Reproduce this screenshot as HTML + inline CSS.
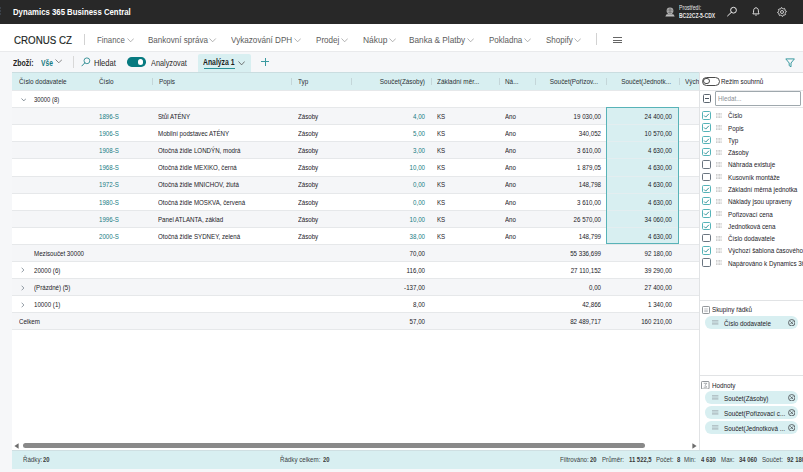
<!DOCTYPE html>
<html><head><meta charset="utf-8">
<style>
*{box-sizing:border-box;margin:0;padding:0}
html,body{width:803px;height:472px;overflow:hidden;background:#f6f7f9;font-family:"Liberation Sans",sans-serif;color:#22211f}
.a{position:absolute}
.t{position:absolute;white-space:nowrap;line-height:1}
</style></head><body>

<div class="a" style="left:0;top:0;width:803px;height:24.4px;background:#282828"></div>
<div class="a" style="left:-0.5px;top:7.3px;width:1.6px;height:1.6px;background:#3a4048"></div>
<div class="a" style="left:-0.5px;top:10.3px;width:1.6px;height:1.6px;background:#3a4048"></div>
<div class="a" style="left:-0.5px;top:13.3px;width:1.6px;height:1.6px;background:#3a4048"></div>
<div class="t" style="left:12.60px;top:8px;font-size:8.4px;color:#fff;font-weight:bold;transform:scaleX(0.93);transform-origin:0 0">Dynamics 365 Business Central</div>
<svg class="a" style="left:664.5px;top:7.3px" width="10" height="10" viewBox="0 0 10 10"><circle cx="5" cy="3.8" r="3.4" fill="#bdbdbd"/><path d="M5 0.6v6.4M1.8 3.8h6.4M2.4 2.2h5.2M2.4 5.4h5.2" stroke="#3a3a3a" stroke-width="0.45"/><path d="M0.3 9.4L1.6 7.2h6.8L9.7 9.4z" fill="#bdbdbd"/></svg>
<div class="t" style="left:679.00px;top:5px;font-size:6.85px;color:#e6e6e6;transform:scaleX(0.75);transform-origin:0 0">Prostředí:</div>
<div class="t" style="left:679.00px;top:13px;font-size:6.85px;color:#e6e6e6;font-weight:bold;transform:scaleX(0.73);transform-origin:0 0">BC22CZ-5-CDX</div>
<svg class="a" style="left:725.5px;top:6px" width="12" height="11" viewBox="0 0 12 11"><circle cx="7.5" cy="4.2" r="2.9" fill="none" stroke="#f2f2f2" stroke-width="0.95"/><path d="M5.4 6.3L1.6 9.9" stroke="#f2f2f2" stroke-width="1" stroke-linecap="round"/></svg>
<svg class="a" style="left:752.4px;top:6.5px" width="8" height="9" viewBox="0 0 8 9"><path d="M0.9 6.9C1.6 6 1.6 5 1.6 3.8 1.6 2 2.6 0.8 4 0.8S6.4 2 6.4 3.8c0 1.2 0 2.2.7 3.1z" fill="none" stroke="#f2f2f2" stroke-width="0.9" stroke-linejoin="round"/><path d="M3.1 7.8c.25.35.55.5.9.5s.65-.15.9-.5" fill="none" stroke="#f2f2f2" stroke-width="0.75"/></svg>
<svg class="a" style="left:776.8px;top:6.5px" width="10" height="10" viewBox="0 0 10 10"><path d="M9.22 4.16 L9.30 5.00 L8.33 5.66 L8.14 6.30 L8.58 7.39 L8.04 8.04 L6.89 7.83 L6.30 8.14 L5.84 9.22 L5.00 9.30 L4.34 8.33 L3.70 8.14 L2.61 8.58 L1.96 8.04 L2.17 6.89 L1.86 6.30 L0.78 5.84 L0.70 5.00 L1.67 4.34 L1.86 3.70 L1.42 2.61 L1.96 1.96 L3.11 2.17 L3.70 1.86 L4.16 0.78 L5.00 0.70 L5.66 1.67 L6.30 1.86 L7.39 1.42 L8.04 1.96 L7.83 3.11 L8.14 3.70Z" fill="none" stroke="#f2f2f2" stroke-width="0.8" stroke-linejoin="round"/><circle cx="5" cy="5" r="1.5" fill="none" stroke="#f2f2f2" stroke-width="0.8"/></svg>
<div class="a" style="left:0;top:24.4px;width:803px;height:26.6px;background:#fff"></div>
<div class="a" style="left:0;top:50.5px;width:803px;height:1px;background:#e9eaec"></div>
<div class="t" style="left:13.80px;top:36px;font-size:10.2px;color:#201f1e;transform:scaleX(0.957);transform-origin:0 0;-webkit-text-stroke:0.15px #201f1e">CRONUS CZ</div>
<div class="a" style="left:83.5px;top:33.5px;width:1px;height:11.5px;background:#d2d2d2"></div>
<div class="t" style="left:97.20px;top:36px;font-size:8.4px;color:#5c5c5c;transform:scaleX(0.93);transform-origin:0 0">Finance</div>
<svg class="a" style="left:126.50px;top:37.90px" width="7.3" height="4.3" viewBox="0 0 7.3 4.3"><path d="M0.5 0.5L3.65 3.80L6.80 0.5" fill="none" stroke="#9a9a9a" stroke-width="0.75"/></svg>
<div class="t" style="left:147.70px;top:36px;font-size:8.4px;color:#5c5c5c;transform:scaleX(0.962);transform-origin:0 0">Bankovní správa</div>
<svg class="a" style="left:209.40px;top:37.90px" width="7.3" height="4.3" viewBox="0 0 7.3 4.3"><path d="M0.5 0.5L3.65 3.80L6.80 0.5" fill="none" stroke="#9a9a9a" stroke-width="0.75"/></svg>
<div class="t" style="left:231.00px;top:36px;font-size:8.4px;color:#5c5c5c;transform:scaleX(0.972);transform-origin:0 0">Vykazování DPH</div>
<svg class="a" style="left:293.90px;top:37.90px" width="7.3" height="4.3" viewBox="0 0 7.3 4.3"><path d="M0.5 0.5L3.65 3.80L6.80 0.5" fill="none" stroke="#9a9a9a" stroke-width="0.75"/></svg>
<div class="t" style="left:316.00px;top:36px;font-size:8.4px;color:#5c5c5c;transform:scaleX(0.964);transform-origin:0 0">Prodej</div>
<svg class="a" style="left:340.90px;top:37.90px" width="7.3" height="4.3" viewBox="0 0 7.3 4.3"><path d="M0.5 0.5L3.65 3.80L6.80 0.5" fill="none" stroke="#9a9a9a" stroke-width="0.75"/></svg>
<div class="t" style="left:362.50px;top:36px;font-size:8.4px;color:#5c5c5c;transform:scaleX(1.009);transform-origin:0 0">Nákup</div>
<svg class="a" style="left:388.50px;top:37.90px" width="7.3" height="4.3" viewBox="0 0 7.3 4.3"><path d="M0.5 0.5L3.65 3.80L6.80 0.5" fill="none" stroke="#9a9a9a" stroke-width="0.75"/></svg>
<div class="t" style="left:409.00px;top:36px;font-size:8.4px;color:#5c5c5c;transform:scaleX(0.982);transform-origin:0 0">Banka &amp; Platby</div>
<svg class="a" style="left:466.90px;top:37.90px" width="7.3" height="4.3" viewBox="0 0 7.3 4.3"><path d="M0.5 0.5L3.65 3.80L6.80 0.5" fill="none" stroke="#9a9a9a" stroke-width="0.75"/></svg>
<div class="t" style="left:489.00px;top:36px;font-size:8.4px;color:#5c5c5c;transform:scaleX(0.954);transform-origin:0 0">Pokladna</div>
<svg class="a" style="left:523.90px;top:37.90px" width="7.3" height="4.3" viewBox="0 0 7.3 4.3"><path d="M0.5 0.5L3.65 3.80L6.80 0.5" fill="none" stroke="#9a9a9a" stroke-width="0.75"/></svg>
<div class="t" style="left:545.50px;top:36px;font-size:8.4px;color:#5c5c5c;transform:scaleX(0.96);transform-origin:0 0">Shopify</div>
<svg class="a" style="left:573.90px;top:37.90px" width="7.3" height="4.3" viewBox="0 0 7.3 4.3"><path d="M0.5 0.5L3.65 3.80L6.80 0.5" fill="none" stroke="#9a9a9a" stroke-width="0.75"/></svg>
<div class="a" style="left:596px;top:33px;width:1px;height:12px;background:#d2d2d2"></div>
<div class="a" style="left:613px;top:37.0px;width:9px;height:0.9px;background:#666"></div>
<div class="a" style="left:613px;top:39.6px;width:9px;height:0.9px;background:#666"></div>
<div class="a" style="left:613px;top:42.2px;width:9px;height:0.9px;background:#666"></div>
<div class="t" style="left:12.60px;top:59px;font-size:8.4px;color:#252423;font-weight:bold;transform:scaleX(0.83);transform-origin:0 0">Zboží:</div>
<div class="t" style="left:41.40px;top:59px;font-size:8.4px;color:#197c83;font-weight:bold;transform:scaleX(0.8);transform-origin:0 0">Vše</div>
<svg class="a" style="left:54.80px;top:59.30px" width="7.6" height="4.3" viewBox="0 0 7.6 4.3"><path d="M0.5 0.5L3.80 3.80L7.10 0.5" fill="none" stroke="#6a6a6a" stroke-width="0.8"/></svg>
<div class="a" style="left:72.5px;top:56px;width:1px;height:11.5px;background:#d8d8d8"></div>
<svg class="a" style="left:81px;top:57px" width="10" height="10" viewBox="0 0 10 10"><circle cx="5.9" cy="3.8" r="2.9" fill="none" stroke="#2f8c93" stroke-width="0.9"/><path d="M3.8 5.9L0.9 8.9" stroke="#2f8c93" stroke-width="1" stroke-linecap="round"/></svg>
<div class="t" style="left:94.20px;top:59px;font-size:8.4px;color:#252423;transform:scaleX(0.9);transform-origin:0 0">Hledat</div>
<div class="a" style="left:126.8px;top:57px;width:19.2px;height:9.5px;border-radius:4.75px;background:#077a80"></div>
<div class="a" style="left:137.6px;top:59px;width:5.6px;height:5.6px;border-radius:50%;background:#fff"></div>
<div class="t" style="left:151.00px;top:59px;font-size:8.4px;color:#2e2d2c;transform:scaleX(0.876);transform-origin:0 0">Analyzovat</div>
<div class="a" style="left:198px;top:54.2px;width:52.5px;height:18.5px;background:#d8eff1;border-radius:2px 2px 0 0"></div>
<div class="t" style="left:203.30px;top:58px;font-size:8.4px;color:#201f1e;font-weight:bold;transform:scaleX(0.815);transform-origin:0 0">Analýza 1</div>
<div class="a" style="left:203.5px;top:67.9px;width:31.3px;height:1.2px;background:#2a9198"></div>
<svg class="a" style="left:237.60px;top:60.80px" width="7.2" height="4.4" viewBox="0 0 7.2 4.4"><path d="M0.5 0.5L3.60 3.90L6.70 0.5" fill="none" stroke="#555" stroke-width="0.8"/></svg>
<div class="a" style="left:261.2px;top:61.3px;width:8px;height:1px;background:#3b9aa0"></div>
<div class="a" style="left:264.7px;top:57.5px;width:1px;height:8.5px;background:#3b9aa0"></div>
<svg class="a" style="left:784.8px;top:57.8px" width="10" height="10" viewBox="0 0 10 10"><path d="M0.8 0.9h8.6L6 5v3.8L4.2 7.6V5z" fill="none" stroke="#3a9aa0" stroke-width="1" stroke-linejoin="round"/></svg>
<div class="a" style="left:12px;top:72px;width:687px;height:378px;background:#fff"></div>
<div class="a" style="left:12px;top:72px;width:687px;height:18px;background:#d8eff1;border-top:0.8px solid #cadde0"></div>
<div class="t" style="left:19.10px;top:79px;font-size:6.85px;color:#2a3033;transform:scaleX(0.935);transform-origin:0 0">Číslo dodavatele</div>
<div class="t" style="left:98.60px;top:79px;font-size:6.85px;color:#2a3033;transform:scaleX(0.935);transform-origin:0 0">Číslo</div>
<div class="a" style="left:152px;top:77.5px;width:0.8px;height:7.5px;background:#c4d6d9"></div>
<div class="a" style="left:291.2px;top:77.5px;width:0.8px;height:7.5px;background:#c4d6d9"></div>
<div class="a" style="left:351px;top:77.5px;width:0.8px;height:7.5px;background:#c4d6d9"></div>
<div class="a" style="left:430.7px;top:77.5px;width:0.8px;height:7.5px;background:#c4d6d9"></div>
<div class="a" style="left:498.5px;top:77.5px;width:0.8px;height:7.5px;background:#c4d6d9"></div>
<div class="a" style="left:534.7px;top:77.5px;width:0.8px;height:7.5px;background:#c4d6d9"></div>
<div class="a" style="left:606.4px;top:77.5px;width:0.8px;height:7.5px;background:#c4d6d9"></div>
<div class="a" style="left:678.7px;top:77.5px;width:0.8px;height:7.5px;background:#c4d6d9"></div>
<div class="t" style="left:158.60px;top:79px;font-size:6.85px;color:#2a3033;transform:scaleX(0.935);transform-origin:0 0">Popis</div>
<div class="t" style="left:298.00px;top:79px;font-size:6.85px;color:#2a3033;transform:scaleX(0.935);transform-origin:0 0">Typ</div>
<div class="t" style="left:324.50px;top:79px;font-size:6.85px;color:#2a3033;transform:scaleX(0.935);transform-origin:100% 0;width:100px;text-align:right">Součet(Zásoby)</div>
<div class="t" style="left:437.40px;top:79px;font-size:6.85px;color:#2a3033;transform:scaleX(0.935);transform-origin:0 0">Základní měr...</div>
<div class="t" style="left:505.40px;top:79px;font-size:6.85px;color:#2a3033;transform:scaleX(0.935);transform-origin:0 0">Ná...</div>
<div class="t" style="left:498.00px;top:79px;font-size:6.85px;color:#2a3033;transform:scaleX(0.935);transform-origin:100% 0;width:100px;text-align:right">Součet(Pořizov...</div>
<div class="t" style="left:571.00px;top:79px;font-size:6.85px;color:#2a3033;transform:scaleX(0.935);transform-origin:100% 0;width:100px;text-align:right">Součet(Jednotk...</div>
<div class="t" style="left:684.70px;top:79px;font-size:6.85px;color:#2a3033;transform:scaleX(0.935);transform-origin:0 0">Vých</div>
<div class="a" style="left:12px;top:90.00px;width:687px;height:17.1px;background:#fff"></div>
<div class="a" style="left:12px;top:107.10px;width:687px;height:17.1px;background:#f5f6f8"></div>
<div class="a" style="left:12px;top:124.20px;width:687px;height:17.1px;background:#fff"></div>
<div class="a" style="left:12px;top:141.30px;width:687px;height:17.1px;background:#f5f6f8"></div>
<div class="a" style="left:12px;top:158.40px;width:687px;height:17.1px;background:#fff"></div>
<div class="a" style="left:12px;top:175.50px;width:687px;height:17.1px;background:#f5f6f8"></div>
<div class="a" style="left:12px;top:192.60px;width:687px;height:17.1px;background:#fff"></div>
<div class="a" style="left:12px;top:209.70px;width:687px;height:17.1px;background:#f5f6f8"></div>
<div class="a" style="left:12px;top:226.80px;width:687px;height:17.1px;background:#fff"></div>
<div class="a" style="left:12px;top:243.90px;width:687px;height:17.1px;background:#f5f6f8"></div>
<div class="a" style="left:12px;top:261.00px;width:687px;height:17.1px;background:#fff"></div>
<div class="a" style="left:12px;top:278.10px;width:687px;height:17.1px;background:#f5f6f8"></div>
<div class="a" style="left:12px;top:295.20px;width:687px;height:17.1px;background:#fff"></div>
<div class="a" style="left:12px;top:312.30px;width:687px;height:17.1px;background:#f5f6f8"></div>
<div class="a" style="left:605.8px;top:107.3px;width:73.2px;height:136.8px;background:#d8eff1"></div>
<div class="a" style="left:12px;top:90.00px;width:687px;height:0.9px;background:#e6e8ea"></div>
<div class="a" style="left:12px;top:107.10px;width:687px;height:0.9px;background:#e6e8ea"></div>
<div class="a" style="left:12px;top:124.20px;width:687px;height:0.9px;background:#e6e8ea"></div>
<div class="a" style="left:12px;top:141.30px;width:687px;height:0.9px;background:#e6e8ea"></div>
<div class="a" style="left:12px;top:158.40px;width:687px;height:0.9px;background:#e6e8ea"></div>
<div class="a" style="left:12px;top:175.50px;width:687px;height:0.9px;background:#e6e8ea"></div>
<div class="a" style="left:12px;top:192.60px;width:687px;height:0.9px;background:#e6e8ea"></div>
<div class="a" style="left:12px;top:209.70px;width:687px;height:0.9px;background:#e6e8ea"></div>
<div class="a" style="left:12px;top:226.80px;width:687px;height:0.9px;background:#e6e8ea"></div>
<div class="a" style="left:12px;top:243.90px;width:687px;height:0.9px;background:#e6e8ea"></div>
<div class="a" style="left:12px;top:261.00px;width:687px;height:0.9px;background:#e6e8ea"></div>
<div class="a" style="left:12px;top:278.10px;width:687px;height:0.9px;background:#e6e8ea"></div>
<div class="a" style="left:12px;top:295.20px;width:687px;height:0.9px;background:#e6e8ea"></div>
<div class="a" style="left:12px;top:312.30px;width:687px;height:0.9px;background:#e6e8ea"></div>
<div class="a" style="left:12px;top:329.40px;width:687px;height:0.9px;background:#e6e8ea"></div>
<div class="a" style="left:605.8px;top:124.20px;width:73.2px;height:0.9px;background:#e3eef0"></div>
<div class="a" style="left:605.8px;top:141.30px;width:73.2px;height:0.9px;background:#e3eef0"></div>
<div class="a" style="left:605.8px;top:158.40px;width:73.2px;height:0.9px;background:#e3eef0"></div>
<div class="a" style="left:605.8px;top:175.50px;width:73.2px;height:0.9px;background:#e3eef0"></div>
<div class="a" style="left:605.8px;top:192.60px;width:73.2px;height:0.9px;background:#e3eef0"></div>
<div class="a" style="left:605.8px;top:209.70px;width:73.2px;height:0.9px;background:#e3eef0"></div>
<div class="a" style="left:605.8px;top:226.80px;width:73.2px;height:0.9px;background:#e3eef0"></div>
<svg class="a" style="left:20.80px;top:97.80px" width="5.6" height="3.4" viewBox="0 0 5.6 3.4"><path d="M0.5 0.5L2.80 2.90L5.10 0.5" fill="none" stroke="#6b7782" stroke-width="0.8"/></svg>
<div class="t" style="left:33.90px;top:97px;font-size:6.85px;transform:scaleX(0.86);transform-origin:0 0">30000 (8)</div>
<div class="t" style="left:99.00px;top:114px;font-size:6.85px;color:#177c83;transform:scaleX(0.9);transform-origin:0 0">1896-S</div>
<div class="t" style="left:158.00px;top:114px;font-size:6.85px;transform:scaleX(0.9);transform-origin:0 0">Stůl ATÉNY</div>
<div class="t" style="left:298.30px;top:114px;font-size:6.85px;transform:scaleX(0.9);transform-origin:0 0">Zásoby</div>
<div class="t" style="left:325.00px;top:114px;font-size:6.85px;color:#177c83;transform:scaleX(0.9);transform-origin:100% 0;width:100px;text-align:right">4,00</div>
<div class="t" style="left:437.40px;top:114px;font-size:6.85px;transform:scaleX(0.9);transform-origin:0 0">KS</div>
<div class="t" style="left:505.30px;top:114px;font-size:6.85px;transform:scaleX(0.9);transform-origin:0 0">Ano</div>
<div class="t" style="left:500.60px;top:114px;font-size:6.85px;transform:scaleX(0.9);transform-origin:100% 0;width:100px;text-align:right">19 030,00</div>
<div class="t" style="left:572.00px;top:114px;font-size:6.85px;transform:scaleX(0.9);transform-origin:100% 0;width:100px;text-align:right">24 400,00</div>
<div class="t" style="left:99.00px;top:131px;font-size:6.85px;color:#177c83;transform:scaleX(0.9);transform-origin:0 0">1906-S</div>
<div class="t" style="left:158.00px;top:131px;font-size:6.85px;transform:scaleX(0.9);transform-origin:0 0">Mobilní podstavec ATÉNY</div>
<div class="t" style="left:298.30px;top:131px;font-size:6.85px;transform:scaleX(0.9);transform-origin:0 0">Zásoby</div>
<div class="t" style="left:325.00px;top:131px;font-size:6.85px;color:#177c83;transform:scaleX(0.9);transform-origin:100% 0;width:100px;text-align:right">5,00</div>
<div class="t" style="left:437.40px;top:131px;font-size:6.85px;transform:scaleX(0.9);transform-origin:0 0">KS</div>
<div class="t" style="left:505.30px;top:131px;font-size:6.85px;transform:scaleX(0.9);transform-origin:0 0">Ano</div>
<div class="t" style="left:500.60px;top:131px;font-size:6.85px;transform:scaleX(0.9);transform-origin:100% 0;width:100px;text-align:right">340,052</div>
<div class="t" style="left:572.00px;top:131px;font-size:6.85px;transform:scaleX(0.9);transform-origin:100% 0;width:100px;text-align:right">10 570,00</div>
<div class="t" style="left:99.00px;top:148px;font-size:6.85px;color:#177c83;transform:scaleX(0.9);transform-origin:0 0">1908-S</div>
<div class="t" style="left:158.00px;top:148px;font-size:6.85px;transform:scaleX(0.9);transform-origin:0 0">Otočná židle LONDÝN, modrá</div>
<div class="t" style="left:298.30px;top:148px;font-size:6.85px;transform:scaleX(0.9);transform-origin:0 0">Zásoby</div>
<div class="t" style="left:325.00px;top:148px;font-size:6.85px;color:#177c83;transform:scaleX(0.9);transform-origin:100% 0;width:100px;text-align:right">3,00</div>
<div class="t" style="left:437.40px;top:148px;font-size:6.85px;transform:scaleX(0.9);transform-origin:0 0">KS</div>
<div class="t" style="left:505.30px;top:148px;font-size:6.85px;transform:scaleX(0.9);transform-origin:0 0">Ano</div>
<div class="t" style="left:500.60px;top:148px;font-size:6.85px;transform:scaleX(0.9);transform-origin:100% 0;width:100px;text-align:right">3 610,00</div>
<div class="t" style="left:572.00px;top:148px;font-size:6.85px;transform:scaleX(0.9);transform-origin:100% 0;width:100px;text-align:right">4 630,00</div>
<div class="t" style="left:99.00px;top:165px;font-size:6.85px;color:#177c83;transform:scaleX(0.9);transform-origin:0 0">1968-S</div>
<div class="t" style="left:158.00px;top:165px;font-size:6.85px;transform:scaleX(0.9);transform-origin:0 0">Otočná židle MEXIKO, černá</div>
<div class="t" style="left:298.30px;top:165px;font-size:6.85px;transform:scaleX(0.9);transform-origin:0 0">Zásoby</div>
<div class="t" style="left:325.00px;top:165px;font-size:6.85px;color:#177c83;transform:scaleX(0.9);transform-origin:100% 0;width:100px;text-align:right">10,00</div>
<div class="t" style="left:437.40px;top:165px;font-size:6.85px;transform:scaleX(0.9);transform-origin:0 0">KS</div>
<div class="t" style="left:505.30px;top:165px;font-size:6.85px;transform:scaleX(0.9);transform-origin:0 0">Ano</div>
<div class="t" style="left:500.60px;top:165px;font-size:6.85px;transform:scaleX(0.9);transform-origin:100% 0;width:100px;text-align:right">1 879,05</div>
<div class="t" style="left:572.00px;top:165px;font-size:6.85px;transform:scaleX(0.9);transform-origin:100% 0;width:100px;text-align:right">4 630,00</div>
<div class="t" style="left:99.00px;top:182px;font-size:6.85px;color:#177c83;transform:scaleX(0.9);transform-origin:0 0">1972-S</div>
<div class="t" style="left:158.00px;top:182px;font-size:6.85px;transform:scaleX(0.9);transform-origin:0 0">Otočná židle MNICHOV, žlutá</div>
<div class="t" style="left:298.30px;top:182px;font-size:6.85px;transform:scaleX(0.9);transform-origin:0 0">Zásoby</div>
<div class="t" style="left:325.00px;top:182px;font-size:6.85px;color:#177c83;transform:scaleX(0.9);transform-origin:100% 0;width:100px;text-align:right">0,00</div>
<div class="t" style="left:437.40px;top:182px;font-size:6.85px;transform:scaleX(0.9);transform-origin:0 0">KS</div>
<div class="t" style="left:505.30px;top:182px;font-size:6.85px;transform:scaleX(0.9);transform-origin:0 0">Ano</div>
<div class="t" style="left:500.60px;top:182px;font-size:6.85px;transform:scaleX(0.9);transform-origin:100% 0;width:100px;text-align:right">148,798</div>
<div class="t" style="left:572.00px;top:182px;font-size:6.85px;transform:scaleX(0.9);transform-origin:100% 0;width:100px;text-align:right">4 630,00</div>
<div class="t" style="left:99.00px;top:200px;font-size:6.85px;color:#177c83;transform:scaleX(0.9);transform-origin:0 0">1980-S</div>
<div class="t" style="left:158.00px;top:200px;font-size:6.85px;transform:scaleX(0.9);transform-origin:0 0">Otočná židle MOSKVA, červená</div>
<div class="t" style="left:298.30px;top:200px;font-size:6.85px;transform:scaleX(0.9);transform-origin:0 0">Zásoby</div>
<div class="t" style="left:325.00px;top:200px;font-size:6.85px;color:#177c83;transform:scaleX(0.9);transform-origin:100% 0;width:100px;text-align:right">0,00</div>
<div class="t" style="left:437.40px;top:200px;font-size:6.85px;transform:scaleX(0.9);transform-origin:0 0">KS</div>
<div class="t" style="left:505.30px;top:200px;font-size:6.85px;transform:scaleX(0.9);transform-origin:0 0">Ano</div>
<div class="t" style="left:500.60px;top:200px;font-size:6.85px;transform:scaleX(0.9);transform-origin:100% 0;width:100px;text-align:right">3 610,00</div>
<div class="t" style="left:572.00px;top:200px;font-size:6.85px;transform:scaleX(0.9);transform-origin:100% 0;width:100px;text-align:right">4 630,00</div>
<div class="t" style="left:99.00px;top:217px;font-size:6.85px;color:#177c83;transform:scaleX(0.9);transform-origin:0 0">1996-S</div>
<div class="t" style="left:158.00px;top:217px;font-size:6.85px;transform:scaleX(0.9);transform-origin:0 0">Panel ATLANTA, základ</div>
<div class="t" style="left:298.30px;top:217px;font-size:6.85px;transform:scaleX(0.9);transform-origin:0 0">Zásoby</div>
<div class="t" style="left:325.00px;top:217px;font-size:6.85px;color:#177c83;transform:scaleX(0.9);transform-origin:100% 0;width:100px;text-align:right">10,00</div>
<div class="t" style="left:437.40px;top:217px;font-size:6.85px;transform:scaleX(0.9);transform-origin:0 0">KS</div>
<div class="t" style="left:505.30px;top:217px;font-size:6.85px;transform:scaleX(0.9);transform-origin:0 0">Ano</div>
<div class="t" style="left:500.60px;top:217px;font-size:6.85px;transform:scaleX(0.9);transform-origin:100% 0;width:100px;text-align:right">26 570,00</div>
<div class="t" style="left:572.00px;top:217px;font-size:6.85px;transform:scaleX(0.9);transform-origin:100% 0;width:100px;text-align:right">34 060,00</div>
<div class="t" style="left:99.00px;top:234px;font-size:6.85px;color:#177c83;transform:scaleX(0.9);transform-origin:0 0">2000-S</div>
<div class="t" style="left:158.00px;top:234px;font-size:6.85px;transform:scaleX(0.9);transform-origin:0 0">Otočná židle SYDNEY, zelená</div>
<div class="t" style="left:298.30px;top:234px;font-size:6.85px;transform:scaleX(0.9);transform-origin:0 0">Zásoby</div>
<div class="t" style="left:325.00px;top:234px;font-size:6.85px;color:#177c83;transform:scaleX(0.9);transform-origin:100% 0;width:100px;text-align:right">38,00</div>
<div class="t" style="left:437.40px;top:234px;font-size:6.85px;transform:scaleX(0.9);transform-origin:0 0">KS</div>
<div class="t" style="left:505.30px;top:234px;font-size:6.85px;transform:scaleX(0.9);transform-origin:0 0">Ano</div>
<div class="t" style="left:500.60px;top:234px;font-size:6.85px;transform:scaleX(0.9);transform-origin:100% 0;width:100px;text-align:right">148,799</div>
<div class="t" style="left:572.00px;top:234px;font-size:6.85px;transform:scaleX(0.9);transform-origin:100% 0;width:100px;text-align:right">4 630,00</div>
<div class="t" style="left:34.00px;top:251px;font-size:6.85px;transform:scaleX(0.9);transform-origin:0 0">Mezisoučet 30000</div>
<div class="t" style="left:325.00px;top:251px;font-size:6.85px;transform:scaleX(0.9);transform-origin:100% 0;width:100px;text-align:right">70,00</div>
<div class="t" style="left:500.60px;top:251px;font-size:6.85px;transform:scaleX(0.9);transform-origin:100% 0;width:100px;text-align:right">55 336,699</div>
<div class="t" style="left:572.00px;top:251px;font-size:6.85px;transform:scaleX(0.9);transform-origin:100% 0;width:100px;text-align:right">92 180,00</div>
<svg class="a" style="left:21.1px;top:267.40px" width="4" height="6" viewBox="0 0 4 6"><path d="M0.6 0.7L2.9 3L0.6 5.3" fill="none" stroke="#6f7b87" stroke-width="0.75"/></svg>
<div class="t" style="left:34.00px;top:268px;font-size:6.85px;transform:scaleX(0.9);transform-origin:0 0">20000 (6)</div>
<div class="t" style="left:325.00px;top:268px;font-size:6.85px;transform:scaleX(0.9);transform-origin:100% 0;width:100px;text-align:right">116,00</div>
<div class="t" style="left:500.60px;top:268px;font-size:6.85px;transform:scaleX(0.9);transform-origin:100% 0;width:100px;text-align:right">27 110,152</div>
<div class="t" style="left:572.00px;top:268px;font-size:6.85px;transform:scaleX(0.9);transform-origin:100% 0;width:100px;text-align:right">39 290,00</div>
<svg class="a" style="left:21.1px;top:284.50px" width="4" height="6" viewBox="0 0 4 6"><path d="M0.6 0.7L2.9 3L0.6 5.3" fill="none" stroke="#6f7b87" stroke-width="0.75"/></svg>
<div class="t" style="left:34.00px;top:285px;font-size:6.85px;transform:scaleX(0.9);transform-origin:0 0">(Prázdné) (5)</div>
<div class="t" style="left:325.00px;top:285px;font-size:6.85px;transform:scaleX(0.9);transform-origin:100% 0;width:100px;text-align:right">-137,00</div>
<div class="t" style="left:500.60px;top:285px;font-size:6.85px;transform:scaleX(0.9);transform-origin:100% 0;width:100px;text-align:right">0,00</div>
<div class="t" style="left:572.00px;top:285px;font-size:6.85px;transform:scaleX(0.9);transform-origin:100% 0;width:100px;text-align:right">27 400,00</div>
<svg class="a" style="left:21.1px;top:301.60px" width="4" height="6" viewBox="0 0 4 6"><path d="M0.6 0.7L2.9 3L0.6 5.3" fill="none" stroke="#6f7b87" stroke-width="0.75"/></svg>
<div class="t" style="left:34.00px;top:302px;font-size:6.85px;transform:scaleX(0.9);transform-origin:0 0">10000 (1)</div>
<div class="t" style="left:325.00px;top:302px;font-size:6.85px;transform:scaleX(0.9);transform-origin:100% 0;width:100px;text-align:right">8,00</div>
<div class="t" style="left:500.60px;top:302px;font-size:6.85px;transform:scaleX(0.9);transform-origin:100% 0;width:100px;text-align:right">42,866</div>
<div class="t" style="left:572.00px;top:302px;font-size:6.85px;transform:scaleX(0.9);transform-origin:100% 0;width:100px;text-align:right">1 340,00</div>
<div class="t" style="left:19.00px;top:319px;font-size:6.85px;transform:scaleX(0.9);transform-origin:0 0">Celkem</div>
<div class="t" style="left:325.00px;top:319px;font-size:6.85px;transform:scaleX(0.9);transform-origin:100% 0;width:100px;text-align:right">57,00</div>
<div class="t" style="left:500.60px;top:319px;font-size:6.85px;transform:scaleX(0.9);transform-origin:100% 0;width:100px;text-align:right">82 489,717</div>
<div class="t" style="left:572.00px;top:319px;font-size:6.85px;transform:scaleX(0.9);transform-origin:100% 0;width:100px;text-align:right">160 210,00</div>
<div class="a" style="left:605.8px;top:107.1px;width:73.2px;height:137.2px;border:1.4px solid #58b3b8"></div>
<svg class="a" style="left:13.9px;top:442.5px" width="5" height="6" viewBox="0 0 5 6"><path d="M4.6 0.3V5.7L0.4 3z" fill="#6d6d6d"/></svg>
<div class="a" style="left:23px;top:443px;width:622px;height:5px;border-radius:2.5px;background:#898989"></div>
<svg class="a" style="left:691.8px;top:442.5px" width="5" height="6" viewBox="0 0 5 6"><path d="M0.4 0.3V5.7L4.6 3z" fill="#6d6d6d"/></svg>
<div class="a" style="left:698.6px;top:72px;width:104.4px;height:378px;background:#fff;border-left:1px solid #e1e3e5;border-top:0.8px solid #dfe1e3"></div>
<div class="a" style="left:702px;top:76.6px;width:17.5px;height:9px;border-radius:4.5px;border:0.8px solid #4a4a4a;background:#fff"></div>
<div class="a" style="left:703.4px;top:78.0px;width:6.2px;height:6.2px;border-radius:50%;border:0.8px solid #4a4a4a"></div>
<div class="t" style="left:721.00px;top:79px;font-size:6.85px;transform:scaleX(0.92);transform-origin:0 0">Režim souhrnů</div>
<div class="a" style="left:699.6px;top:89.8px;width:104px;height:0.9px;background:#e6e7e9"></div>
<div class="a" style="left:702.5px;top:94px;width:8.2px;height:8.6px;border:0.9px solid #5c6670;border-radius:1.5px"></div>
<div class="a" style="left:704.6px;top:97.9px;width:4.1px;height:0.9px;background:#4a5560"></div>
<div class="a" style="left:715px;top:91.4px;width:86px;height:14.4px;border:0.9px solid #9fa8ad;border-radius:1px;background:#fff"></div>
<div class="t" style="left:718.30px;top:96px;font-size:6.85px;color:#8a9096;transform:scaleX(0.92);transform-origin:0 0">Hledat...</div>
<div class="a" style="left:699.6px;top:107.2px;width:104px;height:0.9px;background:#e6e7e9"></div>
<div class="a" style="left:702.2px;top:111.20px;width:8.5px;height:8.4px;border:0.95px solid #55b3b8;border-radius:1.6px;background:#fff"></div>
<svg class="a" style="left:702.2px;top:111.20px" width="9" height="9" viewBox="0 0 9 9"><path d="M2.1 4.5L3.7 6.1L6.9 2.8" fill="none" stroke="#2a8f95" stroke-width="0.95"/></svg>
<svg class="a" style="left:715.8px;top:113.00px" width="6" height="6" viewBox="0 0 6 6"><path d="M0.6 0v5.6M2.1 0v5.6M3.6 0v5.6M5.1 0v5.6" stroke="#9c9c9c" stroke-width="0.7" stroke-dasharray="0.8 0.6"/></svg>
<div class="t" style="left:727.70px;top:113px;font-size:6.85px;transform:scaleX(0.92);transform-origin:0 0">Číslo</div>
<div class="a" style="left:702.2px;top:123.47px;width:8.5px;height:8.4px;border:0.95px solid #55b3b8;border-radius:1.6px;background:#fff"></div>
<svg class="a" style="left:702.2px;top:123.47px" width="9" height="9" viewBox="0 0 9 9"><path d="M2.1 4.5L3.7 6.1L6.9 2.8" fill="none" stroke="#2a8f95" stroke-width="0.95"/></svg>
<svg class="a" style="left:715.8px;top:125.27px" width="6" height="6" viewBox="0 0 6 6"><path d="M0.6 0v5.6M2.1 0v5.6M3.6 0v5.6M5.1 0v5.6" stroke="#9c9c9c" stroke-width="0.7" stroke-dasharray="0.8 0.6"/></svg>
<div class="t" style="left:727.70px;top:126px;font-size:6.85px;transform:scaleX(0.92);transform-origin:0 0">Popis</div>
<div class="a" style="left:702.2px;top:135.74px;width:8.5px;height:8.4px;border:0.95px solid #55b3b8;border-radius:1.6px;background:#fff"></div>
<svg class="a" style="left:702.2px;top:135.74px" width="9" height="9" viewBox="0 0 9 9"><path d="M2.1 4.5L3.7 6.1L6.9 2.8" fill="none" stroke="#2a8f95" stroke-width="0.95"/></svg>
<svg class="a" style="left:715.8px;top:137.54px" width="6" height="6" viewBox="0 0 6 6"><path d="M0.6 0v5.6M2.1 0v5.6M3.6 0v5.6M5.1 0v5.6" stroke="#9c9c9c" stroke-width="0.7" stroke-dasharray="0.8 0.6"/></svg>
<div class="t" style="left:727.70px;top:138px;font-size:6.85px;transform:scaleX(0.92);transform-origin:0 0">Typ</div>
<div class="a" style="left:702.2px;top:148.01px;width:8.5px;height:8.4px;border:0.95px solid #55b3b8;border-radius:1.6px;background:#fff"></div>
<svg class="a" style="left:702.2px;top:148.01px" width="9" height="9" viewBox="0 0 9 9"><path d="M2.1 4.5L3.7 6.1L6.9 2.8" fill="none" stroke="#2a8f95" stroke-width="0.95"/></svg>
<svg class="a" style="left:715.8px;top:149.81px" width="6" height="6" viewBox="0 0 6 6"><path d="M0.6 0v5.6M2.1 0v5.6M3.6 0v5.6M5.1 0v5.6" stroke="#9c9c9c" stroke-width="0.7" stroke-dasharray="0.8 0.6"/></svg>
<div class="t" style="left:727.70px;top:150px;font-size:6.85px;transform:scaleX(0.92);transform-origin:0 0">Zásoby</div>
<div class="a" style="left:702.2px;top:160.28px;width:8.5px;height:8.4px;border:0.95px solid #6a7580;border-radius:1.6px;background:#fff"></div>
<svg class="a" style="left:715.8px;top:162.08px" width="6" height="6" viewBox="0 0 6 6"><path d="M0.6 0v5.6M2.1 0v5.6M3.6 0v5.6M5.1 0v5.6" stroke="#9c9c9c" stroke-width="0.7" stroke-dasharray="0.8 0.6"/></svg>
<div class="t" style="left:727.70px;top:162px;font-size:6.85px;transform:scaleX(0.92);transform-origin:0 0">Náhrada existuje</div>
<div class="a" style="left:702.2px;top:172.55px;width:8.5px;height:8.4px;border:0.95px solid #6a7580;border-radius:1.6px;background:#fff"></div>
<svg class="a" style="left:715.8px;top:174.35px" width="6" height="6" viewBox="0 0 6 6"><path d="M0.6 0v5.6M2.1 0v5.6M3.6 0v5.6M5.1 0v5.6" stroke="#9c9c9c" stroke-width="0.7" stroke-dasharray="0.8 0.6"/></svg>
<div class="t" style="left:727.70px;top:175px;font-size:6.85px;transform:scaleX(0.92);transform-origin:0 0">Kusovník montáže</div>
<div class="a" style="left:702.2px;top:184.82px;width:8.5px;height:8.4px;border:0.95px solid #55b3b8;border-radius:1.6px;background:#fff"></div>
<svg class="a" style="left:702.2px;top:184.82px" width="9" height="9" viewBox="0 0 9 9"><path d="M2.1 4.5L3.7 6.1L6.9 2.8" fill="none" stroke="#2a8f95" stroke-width="0.95"/></svg>
<svg class="a" style="left:715.8px;top:186.62px" width="6" height="6" viewBox="0 0 6 6"><path d="M0.6 0v5.6M2.1 0v5.6M3.6 0v5.6M5.1 0v5.6" stroke="#9c9c9c" stroke-width="0.7" stroke-dasharray="0.8 0.6"/></svg>
<div class="t" style="left:727.70px;top:187px;font-size:6.85px;transform:scaleX(0.92);transform-origin:0 0">Základní měrná jednotka</div>
<div class="a" style="left:702.2px;top:197.09px;width:8.5px;height:8.4px;border:0.95px solid #55b3b8;border-radius:1.6px;background:#fff"></div>
<svg class="a" style="left:702.2px;top:197.09px" width="9" height="9" viewBox="0 0 9 9"><path d="M2.1 4.5L3.7 6.1L6.9 2.8" fill="none" stroke="#2a8f95" stroke-width="0.95"/></svg>
<svg class="a" style="left:715.8px;top:198.89px" width="6" height="6" viewBox="0 0 6 6"><path d="M0.6 0v5.6M2.1 0v5.6M3.6 0v5.6M5.1 0v5.6" stroke="#9c9c9c" stroke-width="0.7" stroke-dasharray="0.8 0.6"/></svg>
<div class="t" style="left:727.70px;top:199px;font-size:6.85px;transform:scaleX(0.92);transform-origin:0 0">Náklady jsou upraveny</div>
<div class="a" style="left:702.2px;top:209.36px;width:8.5px;height:8.4px;border:0.95px solid #55b3b8;border-radius:1.6px;background:#fff"></div>
<svg class="a" style="left:702.2px;top:209.36px" width="9" height="9" viewBox="0 0 9 9"><path d="M2.1 4.5L3.7 6.1L6.9 2.8" fill="none" stroke="#2a8f95" stroke-width="0.95"/></svg>
<svg class="a" style="left:715.8px;top:211.16px" width="6" height="6" viewBox="0 0 6 6"><path d="M0.6 0v5.6M2.1 0v5.6M3.6 0v5.6M5.1 0v5.6" stroke="#9c9c9c" stroke-width="0.7" stroke-dasharray="0.8 0.6"/></svg>
<div class="t" style="left:727.70px;top:212px;font-size:6.85px;transform:scaleX(0.92);transform-origin:0 0">Pořizovací cena</div>
<div class="a" style="left:702.2px;top:221.63px;width:8.5px;height:8.4px;border:0.95px solid #55b3b8;border-radius:1.6px;background:#fff"></div>
<svg class="a" style="left:702.2px;top:221.63px" width="9" height="9" viewBox="0 0 9 9"><path d="M2.1 4.5L3.7 6.1L6.9 2.8" fill="none" stroke="#2a8f95" stroke-width="0.95"/></svg>
<svg class="a" style="left:715.8px;top:223.43px" width="6" height="6" viewBox="0 0 6 6"><path d="M0.6 0v5.6M2.1 0v5.6M3.6 0v5.6M5.1 0v5.6" stroke="#9c9c9c" stroke-width="0.7" stroke-dasharray="0.8 0.6"/></svg>
<div class="t" style="left:727.70px;top:224px;font-size:6.85px;transform:scaleX(0.92);transform-origin:0 0">Jednotková cena</div>
<div class="a" style="left:702.2px;top:233.90px;width:8.5px;height:8.4px;border:0.95px solid #6a7580;border-radius:1.6px;background:#fff"></div>
<svg class="a" style="left:715.8px;top:235.70px" width="6" height="6" viewBox="0 0 6 6"><path d="M0.6 0v5.6M2.1 0v5.6M3.6 0v5.6M5.1 0v5.6" stroke="#9c9c9c" stroke-width="0.7" stroke-dasharray="0.8 0.6"/></svg>
<div class="t" style="left:727.70px;top:236px;font-size:6.85px;transform:scaleX(0.92);transform-origin:0 0">Číslo dodavatele</div>
<div class="a" style="left:702.2px;top:246.17px;width:8.5px;height:8.4px;border:0.95px solid #55b3b8;border-radius:1.6px;background:#fff"></div>
<svg class="a" style="left:702.2px;top:246.17px" width="9" height="9" viewBox="0 0 9 9"><path d="M2.1 4.5L3.7 6.1L6.9 2.8" fill="none" stroke="#2a8f95" stroke-width="0.95"/></svg>
<svg class="a" style="left:715.8px;top:247.97px" width="6" height="6" viewBox="0 0 6 6"><path d="M0.6 0v5.6M2.1 0v5.6M3.6 0v5.6M5.1 0v5.6" stroke="#9c9c9c" stroke-width="0.7" stroke-dasharray="0.8 0.6"/></svg>
<div class="t" style="left:727.70px;top:248px;font-size:6.85px;transform:scaleX(0.92);transform-origin:0 0">Výchozí šablona časového</div>
<div class="a" style="left:702.2px;top:258.44px;width:8.5px;height:8.4px;border:0.95px solid #6a7580;border-radius:1.6px;background:#fff"></div>
<svg class="a" style="left:715.8px;top:260.24px" width="6" height="6" viewBox="0 0 6 6"><path d="M0.6 0v5.6M2.1 0v5.6M3.6 0v5.6M5.1 0v5.6" stroke="#9c9c9c" stroke-width="0.7" stroke-dasharray="0.8 0.6"/></svg>
<div class="t" style="left:727.70px;top:261px;font-size:6.85px;transform:scaleX(0.92);transform-origin:0 0">Napárováno k Dynamics 365 Sales</div>
<div class="a" style="left:699.6px;top:300px;width:104px;height:0.9px;background:#e1e3e5"></div>
<svg class="a" style="left:701.5px;top:305.5px" width="8" height="8" viewBox="0 0 8 8"><rect x="0.45" y="0.45" width="7.1" height="7.1" rx="1" fill="none" stroke="#70757a" stroke-width="0.8"/><path d="M2.2 2.9h3.6M2.2 4.3h3.6M2.2 5.6h3.6" stroke="#8a8f94" stroke-width="0.5"/></svg>
<div class="t" style="left:711.80px;top:307px;font-size:6.85px;transform:scaleX(0.92);transform-origin:0 0">Skupiny řádků</div>
<div class="a" style="left:705px;top:316.20px;width:93.2px;height:12.5px;border-radius:6.25px;background:#d8eff1"></div>
<svg class="a" style="left:712.2px;top:319.90px" width="6.4" height="5.4" viewBox="0 0 6.4 5.4"><path d="M0 0.5H6.4M0 1.95H6.4M0 3.4H6.4M0 4.85H6.4" stroke="#a7b3b8" stroke-width="0.75"/></svg>
<div class="t" style="left:724.00px;top:321px;font-size:6.85px;transform:scaleX(0.92);transform-origin:0 0">Číslo dodavatele</div>
<svg class="a" style="left:787.8px;top:318.75px" width="7.5" height="7.5" viewBox="0 0 7.5 7.5"><circle cx="3.75" cy="3.75" r="3.2" fill="none" stroke="#4a4f54" stroke-width="0.85"/><path d="M2.35 2.35L5.15 5.15M5.15 2.35L2.35 5.15" stroke="#4a4f54" stroke-width="0.8"/></svg>
<div class="a" style="left:699.6px;top:375px;width:104px;height:0.9px;background:#e1e3e5"></div>
<svg class="a" style="left:701px;top:380.7px" width="8.5" height="8.5" viewBox="0 0 8.5 8.5"><rect x="0.45" y="0.45" width="7.6" height="7.6" rx="1" fill="none" stroke="#70757a" stroke-width="0.8"/><path d="M2.7 2.3h3.1L4.1 4.25 5.8 6.2H2.7" fill="none" stroke="#70757a" stroke-width="0.6"/></svg>
<div class="t" style="left:712.00px;top:383px;font-size:6.85px;transform:scaleX(0.92);transform-origin:0 0">Hodnoty</div>
<div class="a" style="left:705px;top:391.20px;width:93.2px;height:12.5px;border-radius:6.25px;background:#d8eff1"></div>
<svg class="a" style="left:712.2px;top:394.90px" width="6.4" height="5.4" viewBox="0 0 6.4 5.4"><path d="M0 0.5H6.4M0 1.95H6.4M0 3.4H6.4M0 4.85H6.4" stroke="#a7b3b8" stroke-width="0.75"/></svg>
<div class="t" style="left:724.00px;top:396px;font-size:6.85px;transform:scaleX(0.92);transform-origin:0 0">Součet(Zásoby)</div>
<svg class="a" style="left:787.8px;top:393.75px" width="7.5" height="7.5" viewBox="0 0 7.5 7.5"><circle cx="3.75" cy="3.75" r="3.2" fill="none" stroke="#4a4f54" stroke-width="0.85"/><path d="M2.35 2.35L5.15 5.15M5.15 2.35L2.35 5.15" stroke="#4a4f54" stroke-width="0.8"/></svg>
<div class="a" style="left:705px;top:406.30px;width:93.2px;height:12.5px;border-radius:6.25px;background:#d8eff1"></div>
<svg class="a" style="left:712.2px;top:410.00px" width="6.4" height="5.4" viewBox="0 0 6.4 5.4"><path d="M0 0.5H6.4M0 1.95H6.4M0 3.4H6.4M0 4.85H6.4" stroke="#a7b3b8" stroke-width="0.75"/></svg>
<div class="t" style="left:724.00px;top:411px;font-size:6.85px;transform:scaleX(0.92);transform-origin:0 0">Součet(Pořizovací c...</div>
<svg class="a" style="left:787.8px;top:408.85px" width="7.5" height="7.5" viewBox="0 0 7.5 7.5"><circle cx="3.75" cy="3.75" r="3.2" fill="none" stroke="#4a4f54" stroke-width="0.85"/><path d="M2.35 2.35L5.15 5.15M5.15 2.35L2.35 5.15" stroke="#4a4f54" stroke-width="0.8"/></svg>
<div class="a" style="left:705px;top:421.20px;width:93.2px;height:12.5px;border-radius:6.25px;background:#d8eff1"></div>
<svg class="a" style="left:712.2px;top:424.90px" width="6.4" height="5.4" viewBox="0 0 6.4 5.4"><path d="M0 0.5H6.4M0 1.95H6.4M0 3.4H6.4M0 4.85H6.4" stroke="#a7b3b8" stroke-width="0.75"/></svg>
<div class="t" style="left:724.00px;top:426px;font-size:6.85px;transform:scaleX(0.92);transform-origin:0 0">Součet(Jednotková ...</div>
<svg class="a" style="left:787.8px;top:423.75px" width="7.5" height="7.5" viewBox="0 0 7.5 7.5"><circle cx="3.75" cy="3.75" r="3.2" fill="none" stroke="#4a4f54" stroke-width="0.85"/><path d="M2.35 2.35L5.15 5.15M5.15 2.35L2.35 5.15" stroke="#4a4f54" stroke-width="0.8"/></svg>
<div class="a" style="left:12px;top:450px;width:791px;height:18.8px;background:#d8eff1;border-top:0.7px solid #cfdfe2"></div>
<div class="t" style="left:23.00px;top:457px;font-size:6.85px;color:#3b3f43;transform:scaleX(0.9);transform-origin:0 0">Řádky:</div>
<div class="t" style="left:43.30px;top:457px;font-size:6.85px;color:#3a3a3a;font-weight:bold;transform:scaleX(0.86);transform-origin:0 0">20</div>
<div class="t" style="left:279.80px;top:457px;font-size:6.85px;color:#3b3f43;transform:scaleX(0.9);transform-origin:0 0">Řádky celkem:</div>
<div class="t" style="left:322.50px;top:457px;font-size:6.85px;color:#3a3a3a;font-weight:bold;transform:scaleX(0.86);transform-origin:0 0">20</div>
<div class="t" style="left:560.00px;top:457px;font-size:6.85px;color:#3b3f43;transform:scaleX(0.9);transform-origin:0 0">Filtrováno:</div>
<div class="t" style="left:590.30px;top:457px;font-size:6.85px;color:#3a3a3a;font-weight:bold;transform:scaleX(0.86);transform-origin:0 0">20</div>
<div class="t" style="left:601.80px;top:457px;font-size:6.85px;color:#3b3f43;transform:scaleX(0.9);transform-origin:0 0">Průměr:</div>
<div class="t" style="left:628.80px;top:457px;font-size:6.85px;color:#3a3a3a;font-weight:bold;transform:scaleX(0.86);transform-origin:0 0">11 522,5</div>
<div class="t" style="left:655.80px;top:457px;font-size:6.85px;color:#3b3f43;transform:scaleX(0.9);transform-origin:0 0">Počet:</div>
<div class="t" style="left:676.70px;top:457px;font-size:6.85px;color:#3a3a3a;font-weight:bold;transform:scaleX(0.86);transform-origin:0 0">8</div>
<div class="t" style="left:684.00px;top:457px;font-size:6.85px;color:#3b3f43;transform:scaleX(0.9);transform-origin:0 0">Min:</div>
<div class="t" style="left:701.00px;top:457px;font-size:6.85px;color:#3a3a3a;font-weight:bold;transform:scaleX(0.86);transform-origin:0 0">4 630</div>
<div class="t" style="left:721.00px;top:457px;font-size:6.85px;color:#3b3f43;transform:scaleX(0.9);transform-origin:0 0">Max:</div>
<div class="t" style="left:738.80px;top:457px;font-size:6.85px;color:#3a3a3a;font-weight:bold;transform:scaleX(0.86);transform-origin:0 0">34 060</div>
<div class="t" style="left:762.40px;top:457px;font-size:6.85px;color:#3b3f43;transform:scaleX(0.9);transform-origin:0 0">Součet:</div>
<div class="t" style="left:787.00px;top:457px;font-size:6.85px;color:#3a3a3a;font-weight:bold;transform:scaleX(0.86);transform-origin:0 0">92 180,00</div>
</body></html>
